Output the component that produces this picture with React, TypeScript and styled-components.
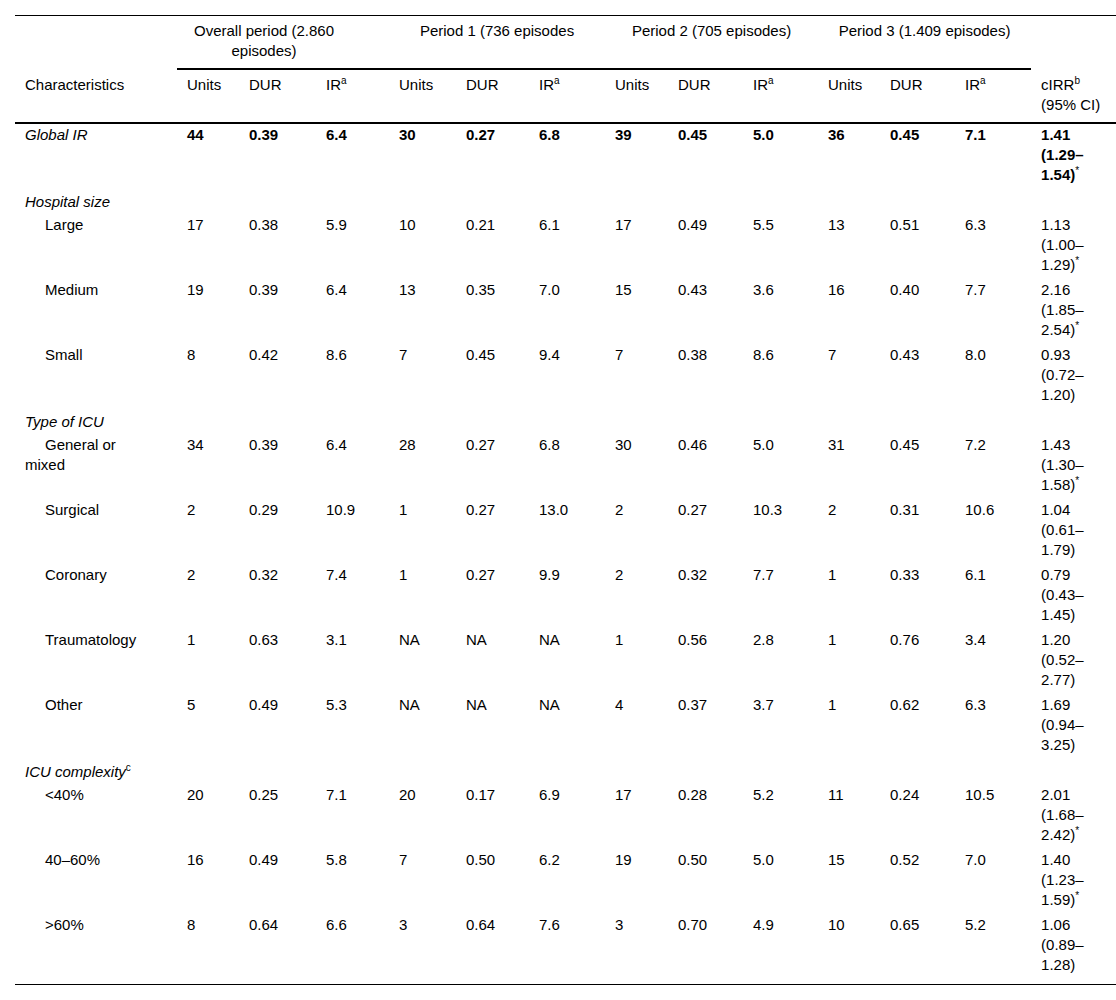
import styled, { createGlobalStyle } from "styled-components";

const GlobalStyle = createGlobalStyle`
  body {
    margin: 0;
    background: #fff;
    font-family: "Liberation Sans", Arial, sans-serif;
    color: #000;
  }
`;

const Wrapper = styled.div`
  padding: 15px 0 0 15px;
`;

const Table = styled.table`
  width: 1101px;
  table-layout: fixed;
  border-collapse: separate;
  border-spacing: 0;
  font-size: 15px;
  line-height: 20px;
`;

const HeadCell = styled.th<{ group?: boolean; top?: boolean; wide?: boolean }>`
  font-weight: normal;
  text-align: ${(p) => (p.group ? "center" : "left")};
  vertical-align: top;
  padding: 5px ${(p) => (p.wide ? "48px" : "10px")} 7px 10px;
  border-top: ${(p) => (p.top ? "1px solid #000" : "0")};
  border-bottom: ${(p) => (p.group ? "2px solid #000" : "0")};
`;

const SubHeadCell = styled.th<{ first?: boolean }>`
  font-weight: normal;
  text-align: left;
  vertical-align: top;
  padding: 5px ${(p) => (p.first ? "27px" : "10px")} 7px 10px;
  border-bottom: 2px solid #000;
`;

const Cell = styled.td<{ bold?: boolean; last?: boolean }>`
  vertical-align: top;
  text-align: left;
  padding: 1px 10px ${(p) => (p.last ? "9px" : "4px")} 10px;
  font-weight: ${(p) => (p.bold ? "bold" : "normal")};
  border-bottom: ${(p) => (p.last ? "1px solid #000" : "0")};
`;

const NameCell = styled(Cell)<{ indent?: boolean; italic?: boolean }>`
  padding-right: 27px;
  text-indent: ${(p) => (p.indent ? "20px" : "0")};
  font-style: ${(p) => (p.italic ? "italic" : "normal")};
  font-weight: normal;
`;

const CategoryCell = styled.td`
  padding: 3px 10px 2px 10px;
  font-style: italic;
  text-align: left;
`;

const Sup = styled.sup`
  font-size: 10px;
  line-height: 0;
  vertical-align: 6px;
  font-style: normal;
  font-weight: normal;
`;

type Row = {
  name: string;
  values: string[];
  ci: string;
  star?: boolean;
};

type Group = { title: string; sup?: string; rows: Row[] };

const groups: Group[] = [
  {
    title: "Hospital size",
    rows: [
      { name: "Large", values: ["17", "0.38", "5.9", "10", "0.21", "6.1", "17", "0.49", "5.5", "13", "0.51", "6.3"], ci: "1.13 (1.00–1.29)", star: true },
      { name: "Medium", values: ["19", "0.39", "6.4", "13", "0.35", "7.0", "15", "0.43", "3.6", "16", "0.40", "7.7"], ci: "2.16 (1.85–2.54)", star: true },
      { name: "Small", values: ["8", "0.42", "8.6", "7", "0.45", "9.4", "7", "0.38", "8.6", "7", "0.43", "8.0"], ci: "0.93 (0.72–1.20)" },
    ],
  },
  {
    title: "Type of ICU",
    rows: [
      { name: "General or mixed", values: ["34", "0.39", "6.4", "28", "0.27", "6.8", "30", "0.46", "5.0", "31", "0.45", "7.2"], ci: "1.43 (1.30–1.58)", star: true },
      { name: "Surgical", values: ["2", "0.29", "10.9", "1", "0.27", "13.0", "2", "0.27", "10.3", "2", "0.31", "10.6"], ci: "1.04 (0.61–1.79)" },
      { name: "Coronary", values: ["2", "0.32", "7.4", "1", "0.27", "9.9", "2", "0.32", "7.7", "1", "0.33", "6.1"], ci: "0.79 (0.43–1.45)" },
      { name: "Traumatology", values: ["1", "0.63", "3.1", "NA", "NA", "NA", "1", "0.56", "2.8", "1", "0.76", "3.4"], ci: "1.20 (0.52–2.77)" },
      { name: "Other", values: ["5", "0.49", "5.3", "NA", "NA", "NA", "4", "0.37", "3.7", "1", "0.62", "6.3"], ci: "1.69 (0.94–3.25)" },
    ],
  },
  {
    title: "ICU complexity",
    sup: "c",
    rows: [
      { name: "<40%", values: ["20", "0.25", "7.1", "20", "0.17", "6.9", "17", "0.28", "5.2", "11", "0.24", "10.5"], ci: "2.01 (1.68–2.42)", star: true },
      { name: "40–60%", values: ["16", "0.49", "5.8", "7", "0.50", "6.2", "19", "0.50", "5.0", "15", "0.52", "7.0"], ci: "1.40 (1.23–1.59)", star: true },
      { name: ">60%", values: ["8", "0.64", "6.6", "3", "0.64", "7.6", "3", "0.70", "4.9", "10", "0.65", "5.2"], ci: "1.06 (0.89–1.28)" },
    ],
  },
];

const colWidths = [162, 62, 77, 73, 67, 73, 76, 63, 75, 75, 62, 75, 76, 85];

const periods = [
  "Overall period (2.860 episodes)",
  "Period 1 (736 episodes",
  "Period 2 (705 episodes)",
  "Period 3 (1.409 episodes)",
];

const subHeads = ["Units", "DUR", "IR"];

function App() {
  const lastGroup = groups.length - 1;
  return (
    <Wrapper>
      <GlobalStyle />
      <Table>
        <colgroup>
          {colWidths.map((w, i) => (
            <col key={i} style={{ width: w }} />
          ))}
        </colgroup>
        <thead>
          <tr>
            <HeadCell top />
            {periods.map((p, i) => (
              <HeadCell key={p} top group wide={i === 0} colSpan={3}>
                {p}
              </HeadCell>
            ))}
            <HeadCell top />
          </tr>
          <tr>
            <SubHeadCell first>Characteristics</SubHeadCell>
            {periods.map((p) =>
              subHeads.map((h) => (
                <SubHeadCell key={p + h}>
                  {h}
                  {h === "IR" && <Sup>a</Sup>}
                </SubHeadCell>
              ))
            )}
            <SubHeadCell>
              cIRR<Sup>b</Sup> (95% CI)
            </SubHeadCell>
          </tr>
        </thead>
        <tbody>
          <tr>
            <NameCell italic>Global IR</NameCell>
            {["44", "0.39", "6.4", "30", "0.27", "6.8", "39", "0.45", "5.0", "36", "0.45", "7.1"].map((v, i) => (
              <Cell key={i} bold>
                {v}
              </Cell>
            ))}
            <Cell bold>
              1.41 (1.29–1.54)<Sup>*</Sup>
            </Cell>
          </tr>
          {groups.map((g, gi) => (
            <>
              <tr key={g.title}>
                <CategoryCell colSpan={14}>
                  {g.title}
                  {g.sup && <Sup>{g.sup}</Sup>}
                </CategoryCell>
              </tr>
              {g.rows.map((r, ri) => {
                const last = gi === lastGroup && ri === g.rows.length - 1;
                return (
                  <tr key={r.name}>
                    <NameCell indent last={last}>
                      {r.name}
                    </NameCell>
                    {r.values.map((v, i) => (
                      <Cell key={i} last={last}>
                        {v}
                      </Cell>
                    ))}
                    <Cell last={last}>
                      {r.ci}
                      {r.star && <Sup>*</Sup>}
                    </Cell>
                  </tr>
                );
              })}
            </>
          ))}
        </tbody>
      </Table>
    </Wrapper>
  );
}

export default App;
